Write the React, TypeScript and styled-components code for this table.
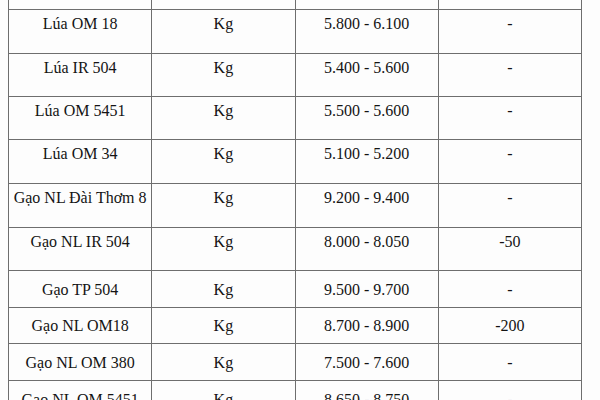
import React from "react";
import styled, { createGlobalStyle } from "styled-components";

const GlobalStyle = createGlobalStyle`
  html, body {
    margin: 0;
    padding: 0;
    background: #fdfdfd;
  }
  body {
    width: 600px;
    height: 400px;
    overflow: hidden;
    font-family: "Liberation Serif", "Times New Roman", serif;
    color: #141414;
  }
`;

const Page = styled.div`
  padding-left: 8px;
`;

const Table = styled.table`
  width: 574px;
  border-collapse: collapse;
  table-layout: fixed;
`;

const Row = styled.tr<{ $h: number }>`
  height: ${(p) => p.$h}px;
`;

const Cell = styled.td<{ $pad: number }>`
  border: 1px solid #6e6e6e;
  padding: ${(p) => p.$pad}px 4px 0;
  vertical-align: top;
  text-align: center;
  font-size: 16px;
  line-height: 18px;
  white-space: nowrap;
`;

interface Price {
  name: string;
  unit: string;
  range: string;
  change: string;
  tall: boolean;
}

const prices: Price[] = [
  { name: "Lúa OM 18", unit: "Kg", range: "5.800 - 6.100", change: "-", tall: true },
  { name: "Lúa IR 504", unit: "Kg", range: "5.400 - 5.600", change: "-", tall: true },
  { name: "Lúa OM 5451", unit: "Kg", range: "5.500 - 5.600", change: "-", tall: true },
  { name: "Lúa OM 34", unit: "Kg", range: "5.100 - 5.200", change: "-", tall: true },
  { name: "Gạo NL Đài Thơm 8", unit: "Kg", range: "9.200 - 9.400", change: "-", tall: true },
  { name: "Gạo NL IR 504", unit: "Kg", range: "8.000 - 8.050", change: "-50", tall: true },
  { name: "Gạo TP 504", unit: "Kg", range: "9.500 - 9.700", change: "-", tall: false },
  { name: "Gạo NL OM18", unit: "Kg", range: "8.700 - 8.900", change: "-200", tall: false },
  { name: "Gạo NL OM 380", unit: "Kg", range: "7.500 - 7.600", change: "-", tall: false },
  { name: "Gạo NL OM 5451", unit: "Kg", range: "8.650 - 8.750", change: "-", tall: false },
];

const App: React.FC = () => {
  return (
    <Page>
      <GlobalStyle />
      <Table>
        <tbody>
          <Row $h={9}>
            <Cell $pad={0} style={{ borderTop: "none" }} />
            <Cell $pad={0} style={{ borderTop: "none" }} />
            <Cell $pad={0} style={{ borderTop: "none" }} />
            <Cell $pad={0} style={{ borderTop: "none" }} />
          </Row>
          {prices.map((p, i) => {
            const h = p.tall ? (i % 4 === 0 ? 44 : 43.4) : 36.7;
            const pad = p.tall ? 5 : 9.5;
            return (
              <Row key={p.name} $h={h}>
                <Cell $pad={pad}>{p.name}</Cell>
                <Cell $pad={pad}>{p.unit}</Cell>
                <Cell $pad={pad}>{p.range}</Cell>
                <Cell $pad={pad}>{p.change}</Cell>
              </Row>
            );
          })}
        </tbody>
      </Table>
    </Page>
  );
};

export default App;
